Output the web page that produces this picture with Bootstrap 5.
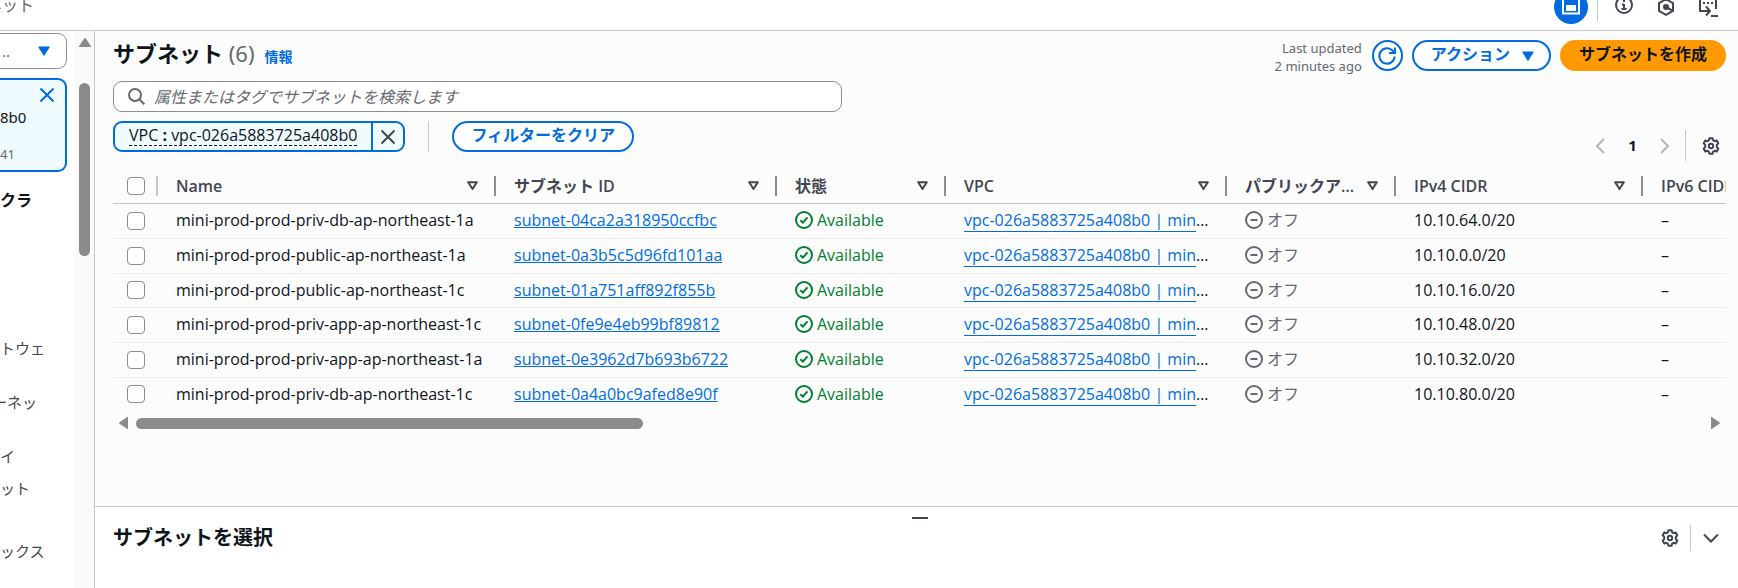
<!DOCTYPE html>
<html lang="ja">
<head>
<meta charset="utf-8">
<meta name="viewport" content="width=device-width, initial-scale=1">
<title>サブネット</title>
<link href="https://cdn.jsdelivr.net/npm/bootstrap@5.3.0/dist/css/bootstrap.min.css" rel="stylesheet">
<style>
:root{--blue:#006ce0;--ink:#0f141a;--slate:#424650;--muted:#656871;--rule:#c6c6cd;--edge:#8c8c94;--pale:#f0fbff}
body{font-family:"Noto Sans","Noto Sans CJK JP",sans-serif;font-size:15px;line-height:20px;color:var(--ink);background:#fff;height:100vh;overflow:hidden}
svg{display:block;flex:none}
button{font-family:inherit}
.ico{background:none;border:0;padding:0;color:var(--slate)}
.topbar{height:31px;padding:0 20px 6px 0;border-bottom:1px solid var(--rule);overflow:hidden}
.crumb{margin-left:-14px;font-size:16px;color:var(--muted);margin-bottom:9px}
.tools{height:34px}
.round-on{width:34px;height:34px;border-radius:50%;background:var(--blue);color:#fff}
.vline{width:1px;background:var(--rule)}
.side{width:75px;overflow:hidden;flex:none}
.picker{width:67px;height:36px;margin-top:2px;border:1px solid var(--edge);border-left:0;border-radius:0 9px 9px 0;background:#fff;padding:0 16px 0 2px;color:var(--muted)}
.chosen{width:67px;height:94px;margin-top:9px;border:2px solid var(--blue);border-left:0;border-radius:0 9px 9px 0;background:var(--pale);padding:7px 10px 0 0}
.side-head{font-size:16px;font-weight:700;margin:18px 0 128px}
.side a{display:block;color:var(--slate);text-decoration:none;white-space:nowrap}
.side a.far{margin-left:-8px}
.track{width:20px;background:#fafafa;border-right:1px solid var(--rule);flex:none}
.thumb-v{width:11px;height:173px;border-radius:6px;background:#8b8b8b;margin-top:36px}
.upper{background:#fcfcfd;padding:8px 12px 0 18px}
.title{font-size:22px;line-height:28px;font-weight:700}
.count{font-weight:400;color:var(--muted)}
.info{font-size:14px;font-weight:700;color:var(--blue);text-decoration:none}
.stamp{font-size:13px;line-height:18px;color:var(--muted)}
.actions{gap:9px;padding-top:1px}
.pill{height:31px;border:2px solid var(--blue);border-radius:16px;background:#fff;color:var(--blue);font-size:16px;font-weight:700;line-height:20px;padding:0 17px 3px}
.pill-menu{padding-right:15px}
.pill-main{background:#f90;border-color:#f90;color:var(--ink)}
.refresh{width:31px;height:31px;border:2px solid var(--blue);border-radius:50%;background:#fff;color:var(--blue);padding:0}
.search{width:729px;max-width:100%;height:31px;margin-top:6px;border:1px solid var(--edge);border-radius:9px;background:#fff;color:var(--muted)}
.search input{border:0;outline:0;background:none;font-size:16px;line-height:24px;padding:0}
.search input::placeholder{font-style:italic;color:var(--muted);opacity:1}
.token{height:31px;border:2px solid var(--blue);border-radius:9px;background:var(--pale)}
.token-text{font-family:"Open Sans","Noto Sans CJK JP",sans-serif;border:0;border-bottom:1px dashed var(--ink);background:none;padding:0;line-height:20px;font-size:16px;color:var(--ink)}
.token-x{width:32px;border:0;border-left:2px solid var(--blue);background:none;padding:0;color:var(--slate)}
.grid-wrap{overflow:hidden;margin-top:8px}
.grid{width:1860px;table-layout:fixed;border-collapse:collapse}
.grid th,.grid td{padding:0;white-space:nowrap;font-family:"Open Sans","Noto Sans CJK JP",sans-serif;font-size:16px}
.grid th{height:34px;border-bottom:1px solid var(--rule);color:var(--slate);font-weight:600}
.grid td{height:35px;padding:0 18px 1px;border-bottom:1px solid #ebebf0;overflow:hidden}
.grid tr:nth-child(3n) td{height:34px}
.grid tr:last-child td{border-bottom:0}
.grid .pick{padding:0 0 0 14px}
.head{padding-left:18px}
.bar{width:2px;height:20px;background:var(--edge)}
.bar.soft{background:var(--rule)}
.sort{margin-right:16px}
.box{appearance:none;width:18px;height:18px;border:1px solid var(--edge);border-radius:4px;background:#fff;display:block;margin:0}
.grid a{color:var(--blue);text-decoration:underline}
.grid a.full{text-decoration:none;border-bottom:1px solid var(--blue)}
.ok{color:#00802f}.off{color:var(--muted)}
.hbar{padding:0 6px;margin-top:6px}
.thumb-h{width:507px;height:11px;border-radius:6px;background:#8b8b8b}
.lower{height:82px;border-top:1px solid var(--rule);padding:0 19px 0 18px}
.grip{width:16px;height:2px;background:var(--slate);margin:10px 0 6px calc(50% - 4px)}
.panel-title{font-size:20px;line-height:26px;font-weight:700}
</style>
</head>
<body class="d-flex flex-column">
<svg width="0" height="0" class="position-absolute" aria-hidden="true">
<defs>
<symbol id="gear" viewBox="0 0 18 18"><path d="M7.4 1.2h3.2l.5 2.1 1.5.9 2.1-.7 1.6 2.8-1.5 1.6v2.2l1.5 1.6-1.6 2.8-2.1-.7-1.5.9-.5 2.1H7.4l-.5-2.1-1.5-.9-2.1.7-1.6-2.8 1.5-1.6V7.900L1.700 6.300l1.600-2.800 2.100.7 1.500-.9z" fill="none" stroke="currentColor" stroke-width="2" stroke-linejoin="round"/><circle cx="9" cy="9" r="2.200" fill="none" stroke="currentColor" stroke-width="2"/></symbol>
<symbol id="sort" viewBox="0 0 11 10"><path d="M1.200 1.200h8.600L5.500 8z" fill="none" stroke="currentColor" stroke-width="2" stroke-linejoin="round"/></symbol>
<symbol id="check" viewBox="0 0 18 18"><circle cx="9" cy="9" r="8" fill="none" stroke="currentColor" stroke-width="2"/><path d="M5.300 9.200l2.600 2.400 4.600-5.200" fill="none" stroke="currentColor" stroke-width="2"/></symbol>
<symbol id="minus" viewBox="0 0 18 18"><circle cx="9" cy="9" r="8" fill="none" stroke="currentColor" stroke-width="2"/><path d="M5.500 9h7" stroke="currentColor" stroke-width="2"/></symbol>
<symbol id="cross" viewBox="0 0 16 16"><path d="M1.500 1.500l13 13M14.500 1.500l-13 13" stroke="currentColor" stroke-width="2"/></symbol>
<symbol id="caret" viewBox="0 0 12 10"><path d="M1 .5h10a.6.6 0 0 1 .5 1L6.600 9.300a.7.7 0 0 1-1.200 0L.5 1.500a.6.6 0 0 1 .5-1z" fill="currentColor"/></symbol>
</defs>
</svg>

<header class="topbar d-flex align-items-end justify-content-between flex-shrink-0">
  <span class="crumb">ネット</span>
  <div class="tools d-flex align-items-center flex-shrink-0">
    <button class="ico round-on d-flex align-items-center justify-content-center" aria-label="パネル"><svg width="18" height="18" viewBox="0 0 18 18" fill="none" stroke="currentColor" stroke-width="2"><path d="M1 1h16v14.500H1z"/><path d="M4 7h10v6H4z" fill="currentColor" stroke="none"/></svg></button>
    <div class="vline align-self-start" style="height:31px;margin-left:9px"></div>
    <div class="d-flex align-items-center" style="gap:24px;margin-left:17px">
      <button class="ico mb-1" aria-label="情報"><svg width="18" height="18" viewBox="0 0 18 18" fill="none" stroke="currentColor" stroke-width="2"><circle cx="9" cy="9" r="8"/><path d="M9 8v5.500M7 8.500h2M6.500 13h5M9 4v2"/></svg></button>
      <button class="ico" aria-label="診断"><svg width="18" height="18" viewBox="0 0 18 18" fill="none" stroke="currentColor" stroke-width="2"><path d="M9 1.200l7 3.900v7.800l-7 3.900-7-3.900V5.100z"/><circle cx="9" cy="9" r="3" fill="currentColor" stroke="none"/><path d="M9 9l6 3.300"/></svg></button>
      <button class="ico" aria-label="シェル"><svg width="19" height="19" viewBox="0 0 19 19" fill="none" stroke="currentColor" stroke-width="2"><path d="M4 13H1V1h16v10"/><path d="M4 5h2M8 5h2M12 5h2M4 13h6M7 8.500l4 4.500-4 4.500M12 18h7"/></svg></button>
    </div>
  </div>
</header>

<div class="d-flex flex-grow-1 overflow-hidden">
  <nav class="side" aria-label="VPC メニュー">
    <button class="picker d-flex align-items-center"><span>..</span><svg class="ms-auto" width="12" height="10" style="color:var(--blue)"><use href="#caret"/></svg></button>
    <div class="chosen">
      <button class="ico d-block ms-auto" aria-label="解除" style="color:var(--blue)"><svg width="16" height="16"><use href="#cross"/></svg></button>
      <div style="margin:4px 0 17px">8b0</div>
      <div class="off" style="font-size:13px">41</div>
    </div>
    <div class="side-head">クラ</div>
    <a href="#" style="margin-bottom:34px">トウェ</a>
    <a href="#" class="far" style="margin-bottom:34px">ーネッ</a>
    <a href="#" style="margin-bottom:12px">イ</a>
    <a href="#" style="margin-bottom:43px">ット</a>
    <a href="#">ックス</a>
  </nav>
  <div class="track d-flex flex-column align-items-center">
    <svg width="12" height="9" viewBox="0 0 12 9" style="margin-top:7px"><path d="M5.200.6a1 1 0 0 1 1.600 0L12 8.200V9H0v-.8z" fill="#8b8b8b"/></svg>
    <div class="thumb-v"></div>
  </div>

  <main class="d-flex flex-column flex-grow-1 overflow-hidden">
    <section class="upper flex-grow-1 overflow-hidden">
      <div class="d-flex align-items-start justify-content-between">
        <div class="d-flex align-items-baseline" style="gap:10px">
          <h1 class="title mb-0">サブネット <span class="count">(6)</span></h1>
          <a href="#" class="info">情報</a>
        </div>
        <div class="d-flex align-items-start" style="gap:10px">
          <div class="stamp text-end">Last updated<br>2 minutes ago</div>
          <div class="actions d-flex">
            <button class="refresh d-flex align-items-center justify-content-center" aria-label="更新"><svg width="20" height="20" viewBox="0 0 20 20" fill="none" stroke="currentColor" stroke-width="2"><path d="M17.700 10.500a7.700 7.700 0 1 1-2.200-6L18 7M18 1.500V7h-6"/></svg></button>
            <button class="pill pill-menu d-flex align-items-center"><span>アクション</span><svg width="12" height="10" style="margin:3px 0 0 12px"><use href="#caret"/></svg></button>
            <button class="pill pill-main">サブネットを作成</button>
          </div>
        </div>
      </div>
      <label class="search d-flex align-items-center"><svg width="17" height="17" viewBox="0 0 17 17" fill="none" stroke="currentColor" stroke-width="2" style="margin:0 9px 0 14px"><circle cx="7" cy="7" r="6"/><path d="M11.300 11.300l5 5"/></svg><input class="flex-grow-1" type="text" placeholder="属性またはタグでサブネットを検索します" aria-label="サブネットを検索"></label>
      <div class="d-flex justify-content-between" style="margin-top:9px">
        <div class="d-flex align-items-start">
          <div class="token d-flex"><div style="padding:2px 14px 0"><button class="token-text">VPC <b>:</b> vpc-026a5883725a408b0</button></div><button class="token-x d-flex align-items-center justify-content-center" aria-label="削除"><svg width="16" height="16"><use href="#cross"/></svg></button></div>
          <div class="vline" style="height:31px;margin:0 23px"></div>
          <button class="pill">フィルターをクリア</button>
        </div>
        <div class="d-flex align-items-center" style="height:31px;margin:9px 6px 0 0">
          <button class="ico" aria-label="前へ" style="color:#b4b4bb"><svg width="10" height="16" viewBox="0 0 10 16" fill="none" stroke="currentColor" stroke-width="2"><path d="M9 1L2 8l7 7"/></svg></button>
          <button class="ico fw-bold" style="color:var(--ink);margin:0 23px 2px;width:9px">1</button>
          <button class="ico" aria-label="次へ" style="color:#b4b4bb"><svg width="10" height="16" viewBox="0 0 10 16" fill="none" stroke="currentColor" stroke-width="2"><path d="M1 1l7 7-7 7"/></svg></button>
          <div class="vline h-100" style="margin:0 16px 0 15px"></div>
          <button class="ico" aria-label="設定"><svg width="18" height="18"><use href="#gear"/></svg></button>
        </div>
      </div>
      <div class="grid-wrap">
        <table class="grid">
          <colgroup><col style="width:45px"><col style="width:338px"><col style="width:281px"><col style="width:169px"><col style="width:281px"><col style="width:169px"><col style="width:247px"><col></colgroup>
          <thead><tr>
            <th class="pick"><div class="d-flex align-items-center justify-content-between"><input type="checkbox" class="box" aria-label="すべて選択"><div class="bar soft"></div></div></th>
            <th><div class="head d-flex align-items-center"><span class="flex-grow-1">Name</span><svg class="sort" width="11" height="10"><use href="#sort"/></svg><div class="bar"></div></div></th>
            <th><div class="head d-flex align-items-center"><span class="flex-grow-1">サブネット ID</span><svg class="sort" width="11" height="10"><use href="#sort"/></svg><div class="bar"></div></div></th>
            <th><div class="head d-flex align-items-center"><span class="flex-grow-1">状態</span><svg class="sort" width="11" height="10"><use href="#sort"/></svg><div class="bar"></div></div></th>
            <th><div class="head d-flex align-items-center"><span class="flex-grow-1">VPC</span><svg class="sort" width="11" height="10"><use href="#sort"/></svg><div class="bar"></div></div></th>
            <th><div class="head d-flex align-items-center"><span class="flex-grow-1">パブリックア…</span><svg class="sort" width="11" height="10"><use href="#sort"/></svg><div class="bar"></div></div></th>
            <th><div class="head d-flex align-items-center"><span class="flex-grow-1">IPv4 CIDR</span><svg class="sort" width="11" height="10"><use href="#sort"/></svg><div class="bar"></div></div></th>
            <th><div class="head">IPv6 CIDR</div></th>
          </tr></thead>
          <tbody id="rows"></tbody>
        </table>
      </div>
      <div class="hbar d-flex align-items-center">
        <svg width="9" height="12" viewBox="0 0 9 12"><path d="M.6 5.200a1 1 0 0 0 0 1.600L8.200 12H9V0h-.8z" fill="#8b8b8b"/></svg>
        <div class="thumb-h ms-2"></div>
        <svg class="ms-auto" width="9" height="12" viewBox="0 0 9 12"><path d="M8.400 5.200a1 1 0 0 1 0 1.600L.8 12H0V0h.8z" fill="#8b8b8b"/></svg>
      </div>
    </section>
    <section class="lower flex-shrink-0">
      <div class="grip"></div>
      <div class="d-flex align-items-center justify-content-between">
        <h2 class="panel-title mb-0">サブネットを選択</h2>
        <div class="d-flex align-items-center">
          <button class="ico" aria-label="設定"><svg width="18" height="18"><use href="#gear"/></svg></button>
          <div class="vline" style="height:26px;margin:0 12px 0 11px"></div>
          <button class="ico" aria-label="閉じる"><svg width="16" height="10" viewBox="0 0 16 10" fill="none" stroke="currentColor" stroke-width="2"><path d="M1 1.500l7 7 7-7"/></svg></button>
        </div>
      </div>
    </section>
  </main>
</div>
<script src="https://cdn.jsdelivr.net/npm/bootstrap@5.3.0/dist/js/bootstrap.bundle.min.js"></script>
<script>
const subnets = [
  ["priv-db-ap-northeast-1a", "04ca2a318950ccfbc", "64"],
  ["public-ap-northeast-1a", "0a3b5c5d96fd101aa", "0"],
  ["public-ap-northeast-1c", "01a751aff892f855b", "16"],
  ["priv-app-ap-northeast-1c", "0fe9e4eb99bf89812", "48"],
  ["priv-app-ap-northeast-1a", "0e3962d7b693b6722", "32"],
  ["priv-db-ap-northeast-1c", "0a4a0bc9afed8e90f", "80"]
];
document.getElementById("rows").innerHTML = subnets.map(([name, id, net]) => `<tr>
  <td class="pick"><input type="checkbox" class="box" aria-label="${name}"></td>
  <td>mini-prod-prod-${name}</td>
  <td><a href="#">subnet-${id}</a></td>
  <td><div class="d-flex align-items-center gap-1 ok"><svg width="18" height="18"><use href="#check"/></svg>Available</div></td>
  <td><a href="#" class="full">vpc-026a5883725a408b0 | min</a>…</td>
  <td><div class="d-flex align-items-center gap-1 off"><svg width="18" height="18"><use href="#minus"/></svg>オフ</div></td>
  <td>10.10.${net}.0/20</td>
  <td>–</td></tr>`).join("");
</script>
</body>
</html>
